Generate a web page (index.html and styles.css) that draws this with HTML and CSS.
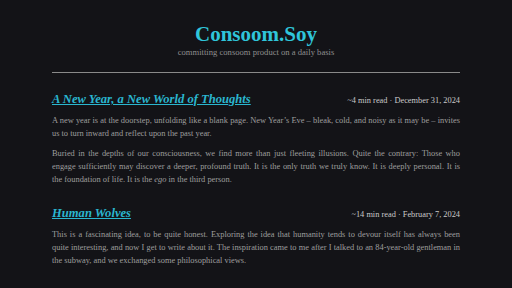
FILE: index.html
```html
<!DOCTYPE html>
<html lang="en">
<head>
  <meta charset="UTF-8">
  <meta name="viewport" content="width=device-width, initial-scale=1.0">
  <title>Consoom.Soy</title>
  <link rel="stylesheet" href="styles.css">
</head>
<body>

  <header class="site-header">
    <h1 class="site-title">Consoom.Soy</h1>
    <p class="tagline">committing consoom product on a daily basis</p>
  </header>

  <hr class="divider">

  <main class="posts">
    <!-- post -->
    <article class="post">
      <div class="post-head">
        <a class="post-title" href="#">A New Year, a New World of Thoughts</a>
        <span class="post-meta">~4 min read · December 31, 2024</span>
      </div>
      <p>A new year is at the doorstep, unfolding like a blank page. New Year’s Eve – bleak, cold, and noisy as it may be – invites us to turn inward and reflect upon the past year.</p>
      <p>Buried in the depths of our consciousness, we find more than just fleeting illusions. Quite the contrary: Those who engage sufficiently may discover a deeper, profound truth. It is the only truth we truly know. It is deeply personal. It is the foundation of life. It is the <em>ego</em> in the third person.</p>
    </article>

    <article class="post">
      <div class="post-head">
        <a class="post-title" href="#">Human Wolves</a>
        <span class="post-meta">~14 min read · February 7, 2024</span>
      </div>
      <p>This is a fascinating idea, to be quite honest. Exploring the idea that humanity tends to devour itself has always been quite interesting, and now I get to write about it. The inspiration came to me after I talked to an 84-year-old gentleman in the subway, and we exchanged some philosophical views.</p>
    </article>

    <article class="post">
      <div class="post-head">
        <a class="post-title" href="#">Politics in Movies</a>
        <span class="post-meta">~9 min read · January 12, 2024</span>
      </div>
      <p>Movies have always carried more than entertainment.</p>
    </article>
  </main>

</body>
</html>
```

FILE: styles.css
```css
body {
  margin: 0;
  background-color: #131317;
  color: #9e9e9e;
  font-family: "Liberation Serif", "Times New Roman", serif;
}
.site-header {
  text-align: center;
  padding-top: 22px;
}
.site-title {
  margin: 0;
  font-size: 21px;
  line-height: 24px;
  color: #2fc5da;
}
.tagline {
  margin: 0;
  font-size: 8.6px;
  line-height: 13px;
  color: #8f8f8f;
}
.divider {
  width: 408px;
  margin: 13px auto 0;
  border: none;
  border-top: 1px solid #8a8a8a;
}
.posts {
  width: 408px;
  margin: 0 auto;
  padding-top: 18px;
}
.post {
  margin-bottom: 19px;
}
.post-head {
  display: flex;
  justify-content: space-between;
  align-items: baseline;
  line-height: 16px;
  margin-bottom: 5px;
}
.post-title {
  font-size: 12.6px;
  font-weight: bold;
  font-style: italic;
  color: #2ab6cf;
}
.post-meta {
  font-size: 8.35px;
  color: #c9c9c9;
}
.post p {
  margin: 0 0 7px;
  font-size: 8.4px;
  line-height: 13px;
  text-align: justify;
}
```
